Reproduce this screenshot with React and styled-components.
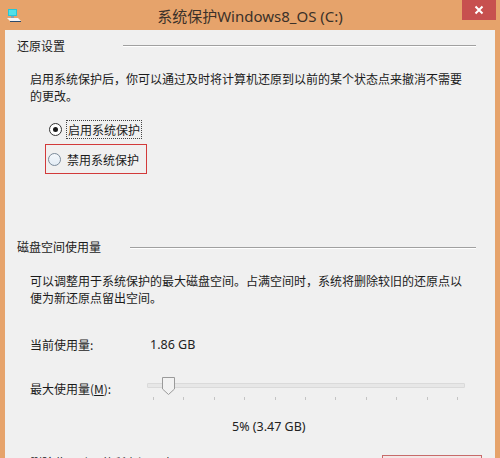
import React from "react";
import styled, { createGlobalStyle } from "styled-components";

const GlobalStyle = createGlobalStyle`
  html, body {
    margin: 0;
    padding: 0;
    overflow: hidden;
    background: #e6a36b;
  }
`;

const Window = styled.div`
  width: 500px;
  height: 458px;
  background: #e6a36b;
  display: flex;
  flex-direction: column;
  overflow: hidden;
  font-family: "Noto Sans CJK SC", "Noto Sans", sans-serif;
`;

const TitleBar = styled.div`
  height: 30px;
  flex: none;
  display: flex;
  align-items: flex-start;
  position: relative;
`;

const AppIcon = styled.svg`
  position: absolute;
  left: 6px;
  top: 9px;
`;

const Title = styled.div`
  flex: 1;
  text-align: center;
  font-family: "Noto Sans", "Noto Sans CJK SC", sans-serif;
  font-size: 15px;
  line-height: 30px;
  color: #3b3129;
  margin-top: 1px;
`;

const CloseButton = styled.div`
  position: absolute;
  right: 4px;
  top: 0;
  width: 34px;
  height: 20px;
  background: #c7504f;
  display: flex;
  align-items: center;
  justify-content: center;
`;

const Panel = styled.div`
  flex: 1;
  margin: 0 5px;
  background: #f0f0f0;
  padding: 8px 0 0 12px;
  color: #1b1b1b;
  font-size: 12px;
`;

const GroupHeader = styled.div`
  display: flex;
  align-items: center;
  height: 16px;
  line-height: 16px;
  margin-top: ${(p) => p.$top || 0}px;
`;

const HeaderText = styled.span`
  width: ${(p) => p.$width}px;
  flex: none;
`;

const HeaderLine = styled.div`
  width: ${(p) => p.$len}px;
  height: 1px;
  background: #a0a0a0;
  border-bottom: 1px solid #ffffff;
  margin-top: ${(p) => p.$dy || 0}px;
`;

const Paragraph = styled.p`
  margin: ${(p) => p.$top}px 0 0 13px;
  width: 440px;
  line-height: 17px;
`;

const RadioList = styled.div`
  margin: 15px 0 0 28px;
  display: flex;
  flex-direction: column;
  align-items: flex-start;
  gap: 5px;
`;

const RadioRow = styled.label`
  display: flex;
  align-items: center;
  gap: 4px;
  padding: 0 5px 0 2px;
  box-sizing: border-box;
  border: 1px solid ${(p) => (p.$marked ? "#d23a3a" : "transparent")};
  height: ${(p) => (p.$marked ? 30 : 20)}px;
  margin-left: ${(p) => (p.$marked ? 0 : 1)}px;
`;

const RadioCircle = styled.span`
  width: 11px;
  height: 11px;
  border-radius: 50%;
  border: 1px solid ${(p) => (p.$on ? "#333" : "#7a8a9a")};
  background: ${(p) => (p.$on ? "#fff" : "linear-gradient(#f4f8fc, #e2ebf4)")};
  display: flex;
  align-items: center;
  justify-content: center;
  flex: none;
  &::after {
    content: "";
    width: 5px;
    height: 5px;
    border-radius: 50%;
    background: #1b1b1b;
    display: ${(p) => (p.$on ? "block" : "none")};
  }
`;

const RadioLabel = styled.span`
  line-height: 17px;
  padding: 0 1px;
  border: 1px dotted ${(p) => (p.$focus ? "#444" : "transparent")};
`;

const InfoRow = styled.div`
  display: flex;
  align-items: center;
  margin: ${(p) => p.$top}px 0 0 13px;
  height: ${(p) => p.$h || 16}px;
`;

const InfoLabel = styled.span`
  width: 120px;
  flex: none;
`;

const InfoValue = styled.span`
  font-family: "Noto Sans", sans-serif;
  font-size: 12.5px;
  color: #222;
`;

const Slider = styled.div`
  position: relative;
  width: 318px;
  height: 24px;
  margin-left: -3px;
`;

const Track = styled.div`
  position: absolute;
  left: 0;
  right: 0;
  top: 7px;
  height: 3px;
  background: #e7e7e7;
  border: 1px solid #dadada;
  border-radius: 1px;
`;

const Thumb = styled.svg`
  position: absolute;
  top: 1px;
`;

const Ticks = styled.div`
  position: absolute;
  left: 6px;
  right: 7px;
  top: 21px;
  display: flex;
  justify-content: space-between;
`;

const Tick = styled.span`
  width: 1px;
  height: 3px;
  background: #c4c4c4;
`;

const Percent = styled.div`
  margin: 19px 0 0 215px;
  font-family: "Noto Sans", sans-serif;
  font-size: 12.5px;
  line-height: 16px;
  color: #222;
`;

const BottomRow = styled.div`
  display: flex;
  align-items: flex-start;
  margin: 16px 0 0 13px;
`;

const BottomText = styled.span`
  flex: 1;
  line-height: 16px;
  padding-top: 4px;
`;

const OutlinedButton = styled.div`
  flex: none;
  width: 98px;
  height: 24px;
  margin: 4px 13px 0 0;
  border: 1px solid #c86a6a;
  background: #f3e6e6;
`;

const App = () => {
  const value = 5;
  const thumbLeft = 6 + (value / 100) * 305 - 6;

  return (
    <>
      <GlobalStyle />
      <Window>
        <TitleBar>
          <AppIcon width="16" height="14" viewBox="0 0 16 14">
            <rect x="2" y="0" width="9" height="7" fill="#26c6d6" />
            <rect x="3" y="1" width="7" height="5" fill="#4fe0e8" />
            <path d="M1 9 L12 9 L15 12 L4 12 Z" fill="#f4f4f4" />
            <path d="M4 12 L15 12 L15 13 L4 13 Z" fill="#2d4a6a" />
            <rect x="5" y="7" width="3" height="2" fill="#8aa0b0" />
          </AppIcon>
          <Title>系统保护Windows8_OS (C:)</Title>
          <CloseButton>
            <svg width="10" height="10" viewBox="0 0 10 10">
              <path d="M1.5 1.5 L8.5 8.5 M8.5 1.5 L1.5 8.5" stroke="#fff" strokeWidth="2" />
            </svg>
          </CloseButton>
        </TitleBar>
        <Panel>
          <GroupHeader>
            <HeaderText $width={106}>还原设置</HeaderText>
            <HeaderLine $len={353} />
          </GroupHeader>
          <Paragraph $top={16}>
            启用系统保护后，你可以通过及时将计算机还原到以前的某个状态点来撤消不需要的更改。
          </Paragraph>
          <RadioList>
            <RadioRow>
              <RadioCircle $on />
              <RadioLabel $focus>启用系统保护</RadioLabel>
            </RadioRow>
            <RadioRow $marked>
              <RadioCircle />
              <RadioLabel>禁用系统保护</RadioLabel>
            </RadioRow>
          </RadioList>
          <GroupHeader $top={65}>
            <HeaderText $width={113}>磁盘空间使用量</HeaderText>
            <HeaderLine $len={346} $dy={1} />
          </GroupHeader>
          <Paragraph $top={17}>
            可以调整用于系统保护的最大磁盘空间。占满空间时，系统将删除较旧的还原点以便为新还原点留出空间。
          </Paragraph>
          <InfoRow $top={30}>
            <InfoLabel>当前使用量:</InfoLabel>
            <InfoValue>1.86 GB</InfoValue>
          </InfoRow>
          <InfoRow $top={24} $h={24}>
            <InfoLabel>
              最大使用量(<u>M</u>):
            </InfoLabel>
            <Slider>
              <Track />
              <Thumb width="13" height="18" viewBox="0 0 13 18" style={{ left: thumbLeft }}>
                <path
                  d="M0.5 0.5 H12.5 V12 L6.5 17.5 L0.5 12 Z"
                  fill="#f2f2f2"
                  stroke="#9a9a9a"
                />
              </Thumb>
              <Ticks>
                {Array.from({ length: 11 }).map((_, i) => (
                  <Tick key={i} />
                ))}
              </Ticks>
            </Slider>
          </InfoRow>
          <Percent>5% (3.47 GB)</Percent>
          <BottomRow>
            <BottomText>删除此驱动器的所有还原点。</BottomText>
            <OutlinedButton />
          </BottomRow>
        </Panel>
      </Window>
    </>
  );
};

export default App;
